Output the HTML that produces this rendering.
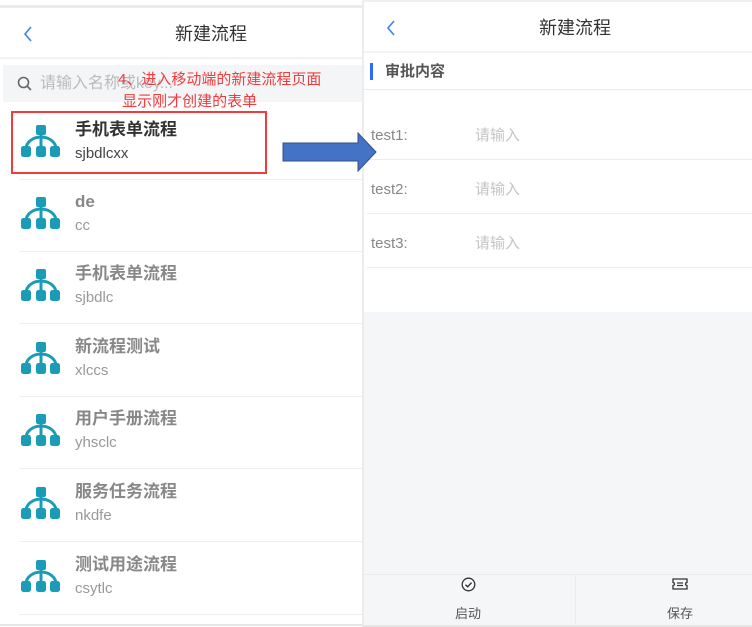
<!DOCTYPE html>
<html><head><meta charset="utf-8"><style>
*{margin:0;padding:0;box-sizing:border-box}
body{width:752px;height:627px;background:#fff;position:relative;overflow:hidden;font-family:"Liberation Sans","Noto Sans CJK SC",sans-serif}
.a{position:absolute}
.t{font-size:16px;color:#333}
.item{position:absolute;left:0;width:362px;height:72px}
.item .ic{position:absolute;left:20px;top:17px}
.item .ti{position:absolute;left:75px;top:12px;font-size:17px;line-height:20px;font-weight:bold;color:#888}
.item .su{position:absolute;left:75px;top:37px;font-size:15px;line-height:18px;color:#999}
.item .ln{position:absolute;left:19px;right:0;bottom:0;height:1px;background:#eee}
.row{position:absolute;left:367px;right:0;height:54px;border-bottom:1px solid #ececec}
.row .l{position:absolute;left:4px;top:21px;font-size:15px;line-height:18px;color:#888}
.row .p{position:absolute;left:108px;top:21px;font-size:15px;line-height:18px;color:#c4c4c4}
</style></head><body>
<svg width="0" height="0" style="position:absolute"><defs><g id="tree"><rect x="16" y="0" width="10" height="10" rx="2" fill="#1a9cb6"/><rect x="19.5" y="8" width="3" height="16" fill="#1a9cb6"/><path d="M6,24 A15,12 0 0 1 36,24" fill="none" stroke="#1a9cb6" stroke-width="3"/><rect x="1" y="21" width="10" height="11" rx="2.5" fill="#1a9cb6"/><rect x="16" y="21" width="10" height="11" rx="2.5" fill="#1a9cb6"/><rect x="30" y="21" width="10" height="11" rx="2.5" fill="#1a9cb6"/></g></defs></svg>

<!-- left panel -->
<div class="a" style="left:0;top:5px;width:362px;height:3px;background:#ececec"></div>
<svg class="a" style="left:23px;top:26px" width="10" height="16"><path d="M8,1 L2,8 L8,15" fill="none" stroke="#3b82f6" stroke-width="1.6"/></svg>
<div class="a t" style="left:175px;top:23px;font-size:18px;line-height:22px">新建流程</div>
<div class="a" style="left:0;top:57px;width:362px;height:2px;background:#f2f2f2"></div>
<div class="a" style="left:3px;top:65px;width:359px;height:37px;background:#f4f5f7"></div>
<svg class="a" style="left:17px;top:76px" width="16" height="16"><circle cx="6.5" cy="6.5" r="5" fill="none" stroke="#666" stroke-width="1.6"/><line x1="10" y1="10" x2="14" y2="14" stroke="#666" stroke-width="1.6"/></svg>
<div class="a" style="left:40px;top:74px;font-size:16px;line-height:20px;color:#bbb">请输入名称或key...</div>
<div class="a" style="left:118px;top:69px;font-size:15px;color:#f03c3c;line-height:22px">4、进入移动端的新建流程页面<br>&nbsp;显示刚才创建的表单</div>

<div class="item" style="top:108px"><svg class="ic" width="42" height="34"><use href="#tree"/></svg><div class="ti" style="color:#333">手机表单流程</div><div class="su" style="color:#444">sjbdlcxx</div><div class="ln"></div></div>
<div class="item" style="top:180px"><svg class="ic" width="42" height="34"><use href="#tree"/></svg><div class="ti">de</div><div class="su">cc</div><div class="ln"></div></div>
<div class="item" style="top:252px"><svg class="ic" width="42" height="34"><use href="#tree"/></svg><div class="ti">手机表单流程</div><div class="su">sjbdlc</div><div class="ln"></div></div>
<div class="item" style="top:325px"><svg class="ic" width="42" height="34"><use href="#tree"/></svg><div class="ti">新流程测试</div><div class="su">xlccs</div><div class="ln"></div></div>
<div class="item" style="top:397px"><svg class="ic" width="42" height="34"><use href="#tree"/></svg><div class="ti">用户手册流程</div><div class="su">yhsclc</div><div class="ln"></div></div>
<div class="item" style="top:470px"><svg class="ic" width="42" height="34"><use href="#tree"/></svg><div class="ti">服务任务流程</div><div class="su">nkdfe</div><div class="ln"></div></div>
<div class="item" style="top:543px"><svg class="ic" width="42" height="34"><use href="#tree"/></svg><div class="ti">测试用途流程</div><div class="su">csytlc</div><div class="ln"></div></div>
<div class="a" style="left:0;top:624px;width:362px;height:2px;background:#e6e6e6"></div>

<div class="a" style="left:11px;top:111px;width:256px;height:63px;border:2px solid #f03c3c"></div>

<!-- right panel -->
<div class="a" style="left:362px;top:0;width:390px;height:627px;border-left:2px solid #ececec;border-top:2px solid #f0f0f0;border-bottom:2px solid #e6e6e6"></div>
<svg class="a" style="left:386px;top:20px" width="10" height="16"><path d="M8,1 L2,8 L8,15" fill="none" stroke="#3b82f6" stroke-width="1.6"/></svg>
<div class="a t" style="left:539px;top:17px;font-size:18px;line-height:22px">新建流程</div>
<div class="a" style="left:364px;top:51px;width:388px;height:2px;background:#f3f3f3"></div>
<div class="a" style="left:370px;top:63px;width:3px;height:17px;background:#2f6bff"></div>
<div class="a" style="left:385px;top:63px;font-size:15px;line-height:18px;font-weight:bold;color:#555">审批内容</div>
<div class="a" style="left:364px;top:89px;width:388px;height:1px;background:#eaeaf0"></div>
<div class="row" style="top:106px"><div class="l">test1:</div><div class="p">请输入</div></div>
<div class="row" style="top:160px"><div class="l">test2:</div><div class="p">请输入</div></div>
<div class="row" style="top:214px"><div class="l">test3:</div><div class="p">请输入</div></div>
<div class="a" style="left:364px;top:312px;width:388px;height:313px;background:#f5f6f8"></div>
<div class="a" style="left:364px;top:574px;width:388px;height:1px;background:#ebebeb"></div>
<div class="a" style="left:575px;top:575px;width:1px;height:50px;background:#ececec"></div>
<svg class="a" style="left:461px;top:577px" width="15" height="15"><circle cx="7.5" cy="7.5" r="6.3" fill="none" stroke="#333" stroke-width="1.3"/><path d="M4.5,7.8 L6.7,9.8 L10.5,5.6" fill="none" stroke="#333" stroke-width="1.4"/></svg>
<div class="a" style="left:455px;top:603px;font-size:13px;color:#555">启动</div>
<svg class="a" style="left:672px;top:578px" width="16" height="12"><path d="M1,1 H15 V4.5 A1.5,1.5 0 0 0 15,7.5 V11 H1 V7.5 A1.5,1.5 0 0 0 1,4.5 Z" fill="none" stroke="#333" stroke-width="1.3"/><line x1="5" y1="5" x2="11" y2="5" stroke="#333" stroke-width="1.2"/><line x1="5" y1="7.5" x2="11" y2="7.5" stroke="#333" stroke-width="1.2"/></svg>
<div class="a" style="left:667px;top:603px;font-size:13px;color:#555">保存</div>

<!-- arrow -->
<svg class="a" style="left:282px;top:132px" width="96" height="42"><path d="M1,11 H76 V1 L94,20 L76,39 V29 H1 Z" fill="#4472c4" stroke="#2f528f" stroke-width="1"/></svg>
</body></html>
